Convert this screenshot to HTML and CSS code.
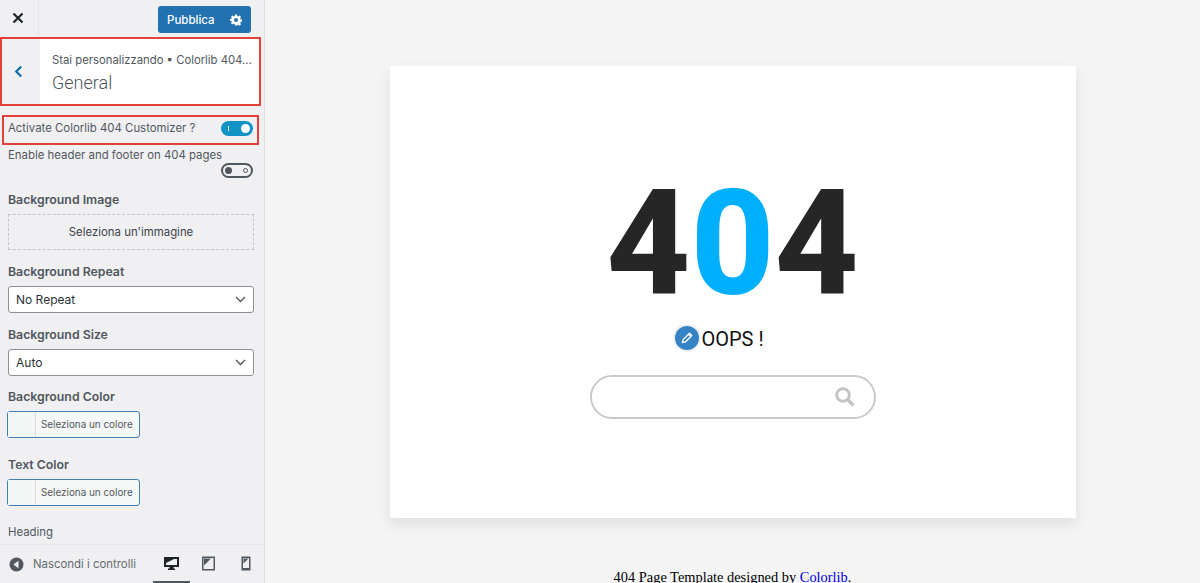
FILE: index.html
```html
<!DOCTYPE html>
<html lang="en">
<head>
  <meta charset="UTF-8" />
  <title>Colorlib 404 Customizer</title>
  <link rel="stylesheet" href="styles.css">
</head>
<body>

<div class="customizer">
  <!-- Sidebar -->
  <aside class="sidebar">
    <div class="topbar">
      <div class="close">
        <svg width="12" height="12" viewBox="0 0 12 12"><path d="M1.500 1.500l9 9M10.500 1.500l-9 9" stroke="#1d2327" stroke-width="2.200" fill="none"/></svg>
      </div>
      <div class="publish">
        <span>Pubblica</span>
        <svg width="12" height="12" viewBox="0 0 24 24"><path fill="#fff" fill-rule="evenodd" d="M10 1h4l.6 3.200 2 .8L19.300 3.200l2.800 2.800-1.800 2.700.8 2 3.200.6v4l-3.200.6-.8 2 1.800 2.700-2.800 2.800-2.700-1.800-2 .8L14 23h-4l-.6-3.200-2-.8-2.700 1.800-2.800-2.800 1.800-2.700-.8-2L-.3 14v-4l3.200-.6.8-2L1.900 6l2.800-2.800 2.700 1.800 2-.8zM12 8a4 4 0 1 0 0 8 4 4 0 0 0 0-8z"/></svg>
      </div>
    </div>

    <div class="section-head">
      <div class="back">
        <svg width="9" height="13" viewBox="0 0 10 14"><path d="M8 1.500L2.500 7 8 12.500" stroke="#0f6cab" stroke-width="2.400" fill="none"/></svg>
      </div>
      <div class="section-title">
        <div class="crumb">Stai personalizzando ▪ Colorlib 404...</div>
        <div class="section-name">General</div>
      </div>
    </div>

    <div class="controls">
      <div class="toggle-row boxed">
        <span>Activate Colorlib 404 Customizer ?</span>
        <span class="toggle on"><i class="tick"></i><i class="knob"></i></span>
      </div>
      <div class="toggle-stack">
        <div class="toggle-label">Enable header and footer on 404 pages</div>
        <span class="toggle off"><i class="knob"></i><i class="ring"></i></span>
      </div>

      <div class="group-label">Background Image</div>
      <div class="image-picker">Seleziona un'immagine</div>

      <div class="group-label">Background Repeat</div>
      <div class="select">No Repeat
        <svg width="11" height="7" viewBox="0 0 11 7"><path d="M1 1l4.500 4.500L10 1" stroke="#50575e" stroke-width="1.400" fill="none"/></svg>
      </div>

      <div class="group-label">Background Size</div>
      <div class="select">Auto
        <svg width="11" height="7" viewBox="0 0 11 7"><path d="M1 1l4.500 4.500L10 1" stroke="#50575e" stroke-width="1.400" fill="none"/></svg>
      </div>

      <div class="group-label bg-color">Background Color</div>
      <div class="color-btn"><span class="swatch"></span><span class="color-text">Seleziona un colore</span></div>

      <div class="group-label text-color">Text Color</div>
      <div class="color-btn"><span class="swatch"></span><span class="color-text">Seleziona un colore</span></div>

      <div class="heading-label">Heading</div>
    </div>

    <div class="footer">
      <div class="hide-controls">
        <svg width="15" height="15" viewBox="0 0 15 15"><circle cx="7.500" cy="7.500" r="7" fill="#50575e"/><path d="M9.500 3.800v7.400L4.300 7.500z" fill="#f0f0f1"/></svg>
        <span>Nascondi i controlli</span>
      </div>
      <div class="devices">
        <div class="device active">
          <svg width="15" height="15" viewBox="0 0 15 15"><path fill="#1d2327" fill-rule="evenodd" d="M0 1h15v10H9.500v1.500H11V14H4v-1.500h1.500V11H0zM2 3v6h11V3z"/><path fill="#1d2327" d="M2 3h8L2 7z"/></svg>
        </div>
        <div class="device">
          <svg width="13" height="15" viewBox="0 0 13 15"><path fill="#50575e" fill-rule="evenodd" d="M0 .5h13v14H0zM1.500 2v11h10V2z"/><path fill="#50575e" d="M2 2.500h7L2 9.500z"/></svg>
        </div>
        <div class="device">
          <svg width="10" height="15" viewBox="0 0 10 15"><path fill="#50575e" fill-rule="evenodd" d="M.5.500h9v14h-9zM2 2v10h6V2z"/><path fill="#50575e" d="M2.500 2.500h5l-5 5z"/></svg>
        </div>
      </div>
    </div>
  </aside>

  <!-- Preview -->
  <main class="preview">
    <div class="card">
      <div class="big-404">4<span class="zero">0</span>4</div>
      <div class="oops">
        <span class="edit-dot">
          <svg width="14" height="14" viewBox="0 0 14 14"><path d="M2.500 11.500l.7-3L9.500 2.200l2.300 2.300-6.300 6.300zM8.400 3.300l2.300 2.300" stroke="#fff" stroke-width="1.300" fill="none"/></svg>
        </span>
        <span>OOPS !</span>
      </div>
      <div class="search">
        <svg width="22" height="22" viewBox="0 0 22 22"><circle cx="9" cy="9" r="6.300" stroke="#c4c4c4" stroke-width="3" fill="none"/><path d="M13.500 13.500l6 6" stroke="#c4c4c4" stroke-width="3.600" fill="none"/></svg>
      </div>
    </div>
    <p class="credit">404 Page Template designed by <a href="#">Colorlib</a>.</p>
  </main>
</div>

</body>
</html>
```

FILE: styles.css
```css
html, body {
  margin: 0;
  padding: 0;
  height: 583px;
  overflow: hidden;
}

body {
  font-family: "Liberation Sans", Arial, sans-serif;
  background-color: #f4f4f5;
  color: #50575e;
}

.customizer {
  display: flex;
  height: 583px;
}

/* Sidebar */
.sidebar {
  width: 264px;
  flex: none;
  display: flex;
  flex-direction: column;
  background-color: #f0f0f3;
  border-right: 1px solid #dcdcde;
}

.topbar {
  height: 37px;
  flex: none;
  display: flex;
  justify-content: space-between;
  align-items: flex-start;
}

.close {
  width: 39px;
  height: 37px;
  display: flex;
  align-items: center;
  justify-content: center;
  box-sizing: border-box;
  padding: 0 3px 1px 0;
  border-right: 1px solid #e4e4e7;
}

.publish {
  width: 93px;
  height: 27px;
  margin: 6px 13px 0 0;
  display: flex;
  align-items: center;
  justify-content: space-between;
  box-sizing: border-box;
  padding: 0 9px 0 9px;
  background-color: #2271b1;
  border-radius: 3px;
  color: #fff;
  font-family: "Inter", sans-serif;
  font-size: 11.500px;
  font-weight: 500;
}

.section-head {
  width: 261px;
  height: 69px;
  flex: none;
  box-sizing: border-box;
  display: flex;
  border: 2px solid #e2413a;
  background-color: #fff;
}

.back {
  width: 38px;
  box-sizing: border-box;
  padding-right: 6px;
  display: flex;
  align-items: center;
  justify-content: center;
  background-color: #f0f0f3;
}

.section-title {
  padding: 13px 0 0 12px;
  white-space: nowrap;
}

.crumb {
  font-family: "Inter", sans-serif;
  font-size: 11.300px;
  line-height: 16px;
  color: #50575e;
}

.section-name {
  font-family: "Roboto", sans-serif;
  font-size: 18px;
  font-weight: 300;
  line-height: 24px;
  margin-top: 3px;
  color: #50575e;
}

.controls {
  flex: 1;
  min-height: 0;
  overflow: hidden;
  padding: 9px 11px 0 8px;
  font-family: "Inter", sans-serif;
  font-size: 11.400px;
}

.toggle-row {
  display: flex;
  align-items: center;
  justify-content: space-between;
}

.boxed {
  width: 257px;
  height: 30px;
  box-sizing: border-box;
  margin-left: -6px;
  padding: 0 4px 4px 4px;
  border: 2px solid #e2413a;
}

.toggle {
  position: relative;
  display: block;
  width: 32px;
  height: 15px;
  box-sizing: border-box;
  border-radius: 8px;
}

.toggle.on {
  background-color: #1193c6;
}

.toggle.on .knob {
  position: absolute;
  right: 3px;
  top: 3px;
  width: 9px;
  height: 9px;
  border-radius: 50%;
  background-color: #fff;
}

.toggle.on .tick {
  position: absolute;
  left: 7px;
  top: 5px;
  width: 1px;
  height: 5px;
  background-color: #fff;
}

.toggle.off {
  border: 2px solid #50575e;
}

.toggle.off .knob {
  position: absolute;
  left: 2px;
  top: 2px;
  width: 7px;
  height: 7px;
  border-radius: 50%;
  background-color: #50575e;
}

.toggle.off .ring {
  position: absolute;
  right: 3px;
  top: 3px;
  width: 3px;
  height: 3px;
  border: 1px solid #50575e;
  border-radius: 50%;
}

.toggle-stack {
  margin-top: 2px;
}

.toggle-label {
  line-height: 16px;
}

.toggle-stack .toggle {
  margin: 0 0 0 213px;
}

.group-label {
  font-family: "Inter", sans-serif;
  font-size: 12.300px;
  font-weight: 600;
  line-height: 16px;
  margin-top: 14px;
  color: #50575e;
}

.group-label.bg-color {
  margin-top: 13px;
}

.group-label.text-color {
  margin-top: 19px;
}

.image-picker {
  height: 36px;
  margin-top: 6px;
  box-sizing: border-box;
  width: 246px;
  display: flex;
  align-items: center;
  justify-content: center;
  border: 1px dashed #c3c4c7;
  color: #3c434a;
}

.select {
  height: 27px;
  width: 246px;
  margin-top: 6px;
  box-sizing: border-box;
  display: flex;
  align-items: center;
  justify-content: space-between;
  padding: 0 7px 0 7px;
  background-color: #fff;
  border: 1px solid #8c8f94;
  border-radius: 3px;
  font-size: 12px;
  color: #2c3338;
}

.color-btn {
  width: 133px;
  height: 27px;
  margin: 6px 0 0 -1px;
  box-sizing: border-box;
  display: flex;
  background-color: #f6f7f7;
  border: 1px solid #3f7fb5;
  border-radius: 3px;
}

.swatch {
  width: 27px;
  background-color: #f3f6f4;
  border-right: 1px solid #dcdcde;
}

.color-text {
  padding-left: 5px;
  line-height: 25px;
  font-size: 9.900px;
  color: #50575e;
}

.heading-label {
  margin-top: 18px;
  line-height: 16px;
}

.footer {
  height: 38px;
  flex: none;
  display: flex;
  align-items: center;
  justify-content: space-between;
  border-top: 1px solid #e7e7ea;
}

.hide-controls {
  display: flex;
  align-items: center;
  gap: 9px;
  padding-left: 9px;
  font-family: "Inter", sans-serif;
  font-size: 11.400px;
  color: #646970;
}

.devices {
  display: flex;
}

.device {
  width: 37px;
  height: 38px;
  box-sizing: border-box;
  display: flex;
  align-items: center;
  justify-content: center;
  border-bottom: 2px solid transparent;
}

.device.active {
  border-bottom-color: #50575e;
}

/* Preview */
.preview {
  flex: 1;
  min-width: 0;
  display: flex;
  flex-direction: column;
  align-items: center;
  padding: 66px 0 0 0;
  box-sizing: border-box;
  color: #000;
}

.card {
  width: 686px;
  height: 452px;
  flex: none;
  box-sizing: border-box;
  padding-top: 106px;
  display: flex;
  flex-direction: column;
  align-items: center;
  background-color: #fff;
  box-shadow: 0 6px 14px rgba(0, 0, 0, 0.09);
}

.big-404 {
  font-family: "Roboto", sans-serif;
  font-size: 146px;
  font-weight: 800;
  line-height: 146px;
  color: #262626;
}

.zero {
  color: #00b0ff;
}

.oops {
  position: relative;
  margin-top: 9px;
  font-family: "Roboto", sans-serif;
  font-size: 20px;
  color: #111;
}

/* customizer edit shortcut, sits left of the text */
.edit-dot {
  position: absolute;
  left: -26px;
  top: -1px;
  width: 24px;
  height: 24px;
  border-radius: 50%;
  display: flex;
  align-items: center;
  justify-content: center;
  background-color: #3582c4;
  box-shadow: 0 0 0 2px #f0f0f1;
}

.search {
  width: 286px;
  height: 44px;
  margin-top: 24px;
  box-sizing: border-box;
  display: flex;
  align-items: center;
  justify-content: flex-end;
  padding-right: 18px;
  border: 2px solid #c9c9c9;
  border-radius: 22px;
  background-color: #fff;
}

.credit {
  margin: 51px 0 0 0;
  font-family: "Liberation Serif", serif;
  font-size: 14.400px;
  white-space: nowrap;
}

.credit a {
  color: #0000ee;
  text-decoration: none;
}
```
